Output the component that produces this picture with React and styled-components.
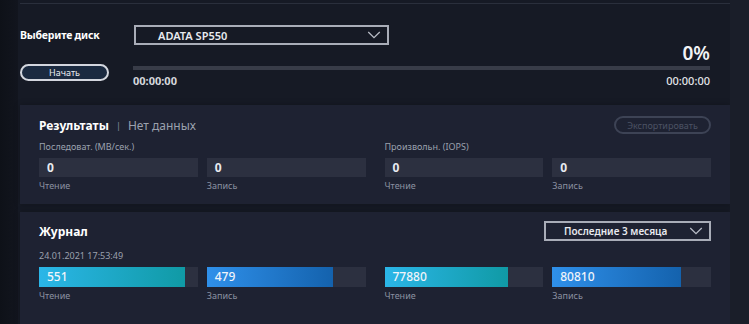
import styled, { createGlobalStyle } from 'styled-components'

const GlobalStyle = createGlobalStyle`
    html, body {
        margin: 0;
        padding: 0;
        background: #161a25;
        font-family: "Noto Sans", "Open Sans", sans-serif;
        color: #fff;
    }
`

const Chevron = ({ size = 14 }) => (
    <svg width={size} height={size * 0.55} viewBox="0 0 14 8" fill="none">
        <path d="M1 1 L7 7 L13 1" stroke="#b9bdc7" strokeWidth="1.3" />
    </svg>
)

const stats = [
    { caption: 'Последоват. (MB/сек.)', read: 0, write: 0 },
    { caption: 'Произвольн. (IOPS)', read: 0, write: 0 },
]

const journal = [
    { read: 551, write: 479, max: 600 },
    { read: 77880, write: 80810, max: 100000 },
]

const App = () => {
    return (
        <>
            <GlobalStyle />
            <Page>
                <Sidebar />
                <Main>
                    <TopSection>
                        <Label>Выберите диск</Label>
                        <Select>
                            <span>ADATA SP550</span>
                            <Chevron />
                        </Select>
                        <StartCell>
                            <StartButton>Начать</StartButton>
                        </StartCell>
                        <Progress>
                            <Percent>0%</Percent>
                            <Track />
                            <Times>
                                <span>00:00:00</span>
                                <Remaining>00:00:00</Remaining>
                            </Times>
                        </Progress>
                    </TopSection>

                    <Panel>
                        <Header>
                            <Title>
                                Результаты<Divider>|</Divider><Muted>Нет данных</Muted>
                            </Title>
                            <ExportButton>Экспортировать</ExportButton>
                        </Header>
                        <Groups>
                            {stats.map(s => (
                                <div key={s.caption}>
                                    <Caption>{s.caption}</Caption>
                                    <Cells>
                                        <div>
                                            <ValueBox>{s.read}</ValueBox>
                                            <SubLabel>Чтение</SubLabel>
                                        </div>
                                        <div>
                                            <ValueBox>{s.write}</ValueBox>
                                            <SubLabel>Запись</SubLabel>
                                        </div>
                                    </Cells>
                                </div>
                            ))}
                        </Groups>
                    </Panel>

                    <JournalPanel>
                        <Header>
                            <Title>Журнал</Title>
                            <PeriodSelect>
                                <span>Последние 3 месяца</span>
                                <Chevron />
                            </PeriodSelect>
                        </Header>
                        <DateLine>24.01.2021 17:53:49</DateLine>
                        <BarGroups>
                            {journal.map((j, i) => (
                                <Cells key={i}>
                                    <div>
                                        <BarTrack>
                                            <BarFill kind="read" style={{ width: `${(j.read / j.max) * 100}%` }}>
                                                {j.read}
                                            </BarFill>
                                        </BarTrack>
                                        <SubLabel>Чтение</SubLabel>
                                    </div>
                                    <div>
                                        <BarTrack>
                                            <BarFill kind="write" style={{ width: `${(j.write / j.max) * 100}%` }}>
                                                {j.write}
                                            </BarFill>
                                        </BarTrack>
                                        <SubLabel>Запись</SubLabel>
                                    </div>
                                </Cells>
                            ))}
                        </BarGroups>
                    </JournalPanel>
                </Main>
                <RightStrip />
            </Page>
        </>
    )
}

export default App

const Page = styled.div`
    display: flex;
    height: 324px;
    overflow: hidden;
`

const Sidebar = styled.div`
    width: 18px;
    flex-shrink: 0;
    background: linear-gradient(90deg, #0e1118, #12151e);
`

const RightStrip = styled.div`
    flex: 1;
    background: #1a1e29;
`

const Main = styled.div`
    width: 710px;
    flex-shrink: 0;
    padding: 3px 0 0 2px;
    display: flex;
    flex-direction: column;
    background: #161a25;
`

const TopSection = styled.div`
    border-top: 1px solid #2a2f3c;
    height: 102px;
    display: grid;
    grid-template-columns: 114px 576px;
    grid-template-rows: 20px auto;
    padding-top: 21px;
    box-sizing: border-box;
`

const Label = styled.div`
    font-size: 10.5px;
    font-weight: 700;
    line-height: 20px;
    letter-spacing: -0.2px;
`

const Select = styled.div`
    width: 255px;
    height: 20px;
    box-sizing: border-box;
    border: 2px solid #a9adb8;
    display: flex;
    align-items: center;
    justify-content: space-between;
    padding: 0 6px 0 22px;
    font-size: 11px;
    font-weight: 600;
    color: #e8eaef;
`

const StartCell = styled.div`
    padding-top: 14px;
`

const StartButton = styled.button`
    width: 89px;
    height: 17px;
    border-radius: 9px;
    border: 2px solid #d3d6de;
    background: #1b2a40;
    color: #e8eaef;
    font-family: inherit;
    font-size: 9px;
    padding: 0;
    line-height: 13px;
`

const Progress = styled.div`
    display: flex;
    flex-direction: column;
    margin-left: -1px;
`

const Percent = styled.div`
    text-align: right;
    font-size: 19px;
    font-weight: 600;
    line-height: 18px;
    margin-top: -1px;
    color: #f2f3f6;
`

const Track = styled.div`
    height: 4px;
    margin-top: 4px;
    background: #383c48;
`

const Times = styled.div`
    display: flex;
    justify-content: space-between;
    margin-top: 4px;
    font-size: 11px;
    font-weight: 700;
    line-height: 14px;
    color: #d5d7dc;
`

const Remaining = styled.span`
    font-weight: 500;
    color: #e4e6ea;
`

const Panel = styled.div`
    background: #1e2232;
    padding: 11px 19px 12px;
    box-shadow: 0 0 6px rgba(0, 0, 0, 0.25);
`

const JournalPanel = styled(Panel)`
    margin-top: 8px;
    padding-top: 9px;
    flex: 1;
`

const Header = styled.div`
    display: flex;
    align-items: center;
    justify-content: space-between;
    min-height: 18px;
`

const Title = styled.div`
    font-size: 12px;
    font-weight: 700;
    display: flex;
    align-items: center;
`

const Divider = styled.span`
    font-weight: 400;
    color: #8a90a0;
    margin: 0 7px;
    font-size: 9px;
`

const Muted = styled.span`
    font-weight: 400;
    color: #9ba1ae;
`

const ExportButton = styled.button`
    width: 97px;
    height: 18px;
    border-radius: 9px;
    border: 2px solid #3d4355;
    background: transparent;
    color: #4c5264;
    font-family: inherit;
    font-size: 9px;
    padding: 0;
    line-height: 13px;
`

const PeriodSelect = styled.div`
    width: 167px;
    height: 20px;
    box-sizing: border-box;
    border: 2px solid #a9adb8;
    display: flex;
    align-items: center;
    justify-content: space-between;
    padding: 0 6px 0 18px;
    font-size: 10px;
    font-weight: 600;
    color: #e8eaef;
`

const Groups = styled.div`
    display: grid;
    grid-template-columns: 1fr 1fr;
    column-gap: 19px;
`

const BarGroups = styled(Groups)`
    margin-top: 5px;
`

const Caption = styled.div`
    font-size: 9px;
    line-height: 12px;
    color: #9ba1ae;
    margin-top: 7px;
    margin-bottom: 5px;
`

const Cells = styled.div`
    display: grid;
    grid-template-columns: 1fr 1fr;
    column-gap: 9px;
`

const ValueBox = styled.div`
    height: 19px;
    background: #2c3040;
    padding-left: 8px;
    font-size: 12px;
    font-weight: 700;
    line-height: 19px;
    color: #e8eaef;
`

const SubLabel = styled.div`
    font-size: 9px;
    line-height: 12px;
    color: #8a90a0;
    margin-top: 3px;
`

const DateLine = styled.div`
    font-size: 9px;
    line-height: 12px;
    color: #9ba1ae;
    margin-top: 9px;
`

const BarTrack = styled.div`
    height: 20px;
    background: #2c3040;
    display: flex;
`

const BarFill = styled.div`
    height: 100%;
    box-sizing: border-box;
    padding-left: 8px;
    font-size: 12px;
    font-weight: 500;
    line-height: 20px;
    color: #f0f4fa;
    background: ${p => p.kind === 'read'
        ? 'linear-gradient(90deg, #2bb6e8, #109aa5)'
        : 'linear-gradient(90deg, #2f90ea, #1462ad)'};
`
